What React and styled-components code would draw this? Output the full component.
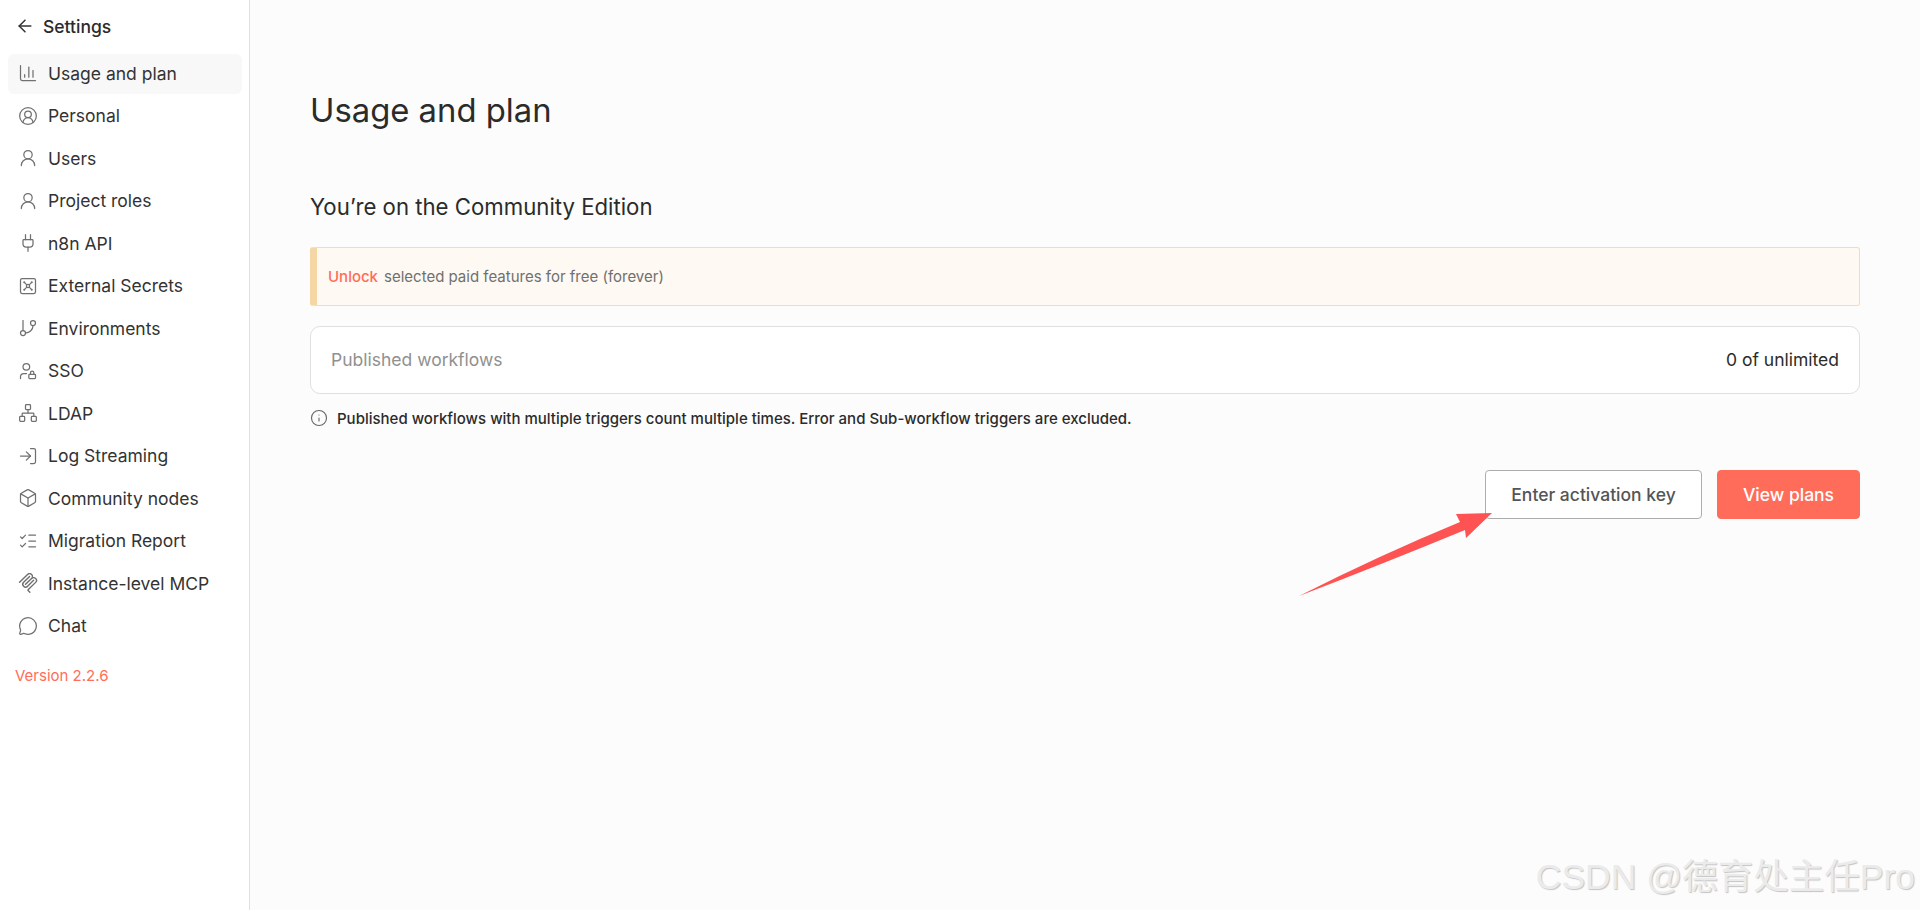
import React from "react";
import styled, { createGlobalStyle } from "styled-components";
import {
  ArrowLeft,
  ChartColumn,
  CircleUserRound,
  UserRound,
  Plug,
  Vault,
  GitBranch,
  UserLock,
  Network,
  LogIn,
  Box,
  ListChecks,
  MessageCircle,
  Info
} from "lucide-react";

const GlobalStyle = createGlobalStyle`
  html, body {
    margin: 0;
    padding: 0;
    height: 100%;
    background: #fcfcfc;
    font-family: Inter, "Liberation Sans", sans-serif;
    color: #2b2b2b;
  }
`;

const McpIcon = ({ size = 20 }) => (
  <svg width={size} height={size} viewBox="0 0 24 24" fill="#707070">
    <path d="M15.688 2.343a2.588 2.588 0 00-3.61 0l-9.626 9.44a.863.863 0 01-1.203 0 .823.823 0 010-1.18l9.626-9.44a4.313 4.313 0 016.016 0 4.116 4.116 0 011.204 3.54 4.3 4.3 0 013.609 1.18l.05.05a4.115 4.115 0 010 5.9l-8.706 8.537a.274.274 0 000 .393l1.788 1.754a.823.823 0 010 1.18.863.863 0 01-1.203 0l-1.788-1.753a1.92 1.92 0 010-2.754l8.706-8.538a2.47 2.47 0 000-3.54l-.05-.049a2.588 2.588 0 00-3.607-.003l-7.172 7.034-.002.002-.098.097a.863.863 0 01-1.204 0 .823.823 0 010-1.18l7.273-7.133a2.47 2.47 0 00-.003-3.537z" />
    <path d="M14.485 4.703a.823.823 0 000-1.18.863.863 0 00-1.204 0l-7.119 6.982a4.115 4.115 0 000 5.9 4.314 4.314 0 006.016 0l7.12-6.982a.823.823 0 000-1.18.863.863 0 00-1.204 0l-7.119 6.982a2.588 2.588 0 01-3.61 0 2.47 2.47 0 010-3.54l7.12-6.982z" />
  </svg>
);

const menuItems = [
  { label: "Usage and plan", icon: ChartColumn, active: true },
  { label: "Personal", icon: CircleUserRound },
  { label: "Users", icon: UserRound },
  { label: "Project roles", icon: UserRound },
  { label: "n8n API", icon: Plug },
  { label: "External Secrets", icon: Vault },
  { label: "Environments", icon: GitBranch },
  { label: "SSO", icon: UserLock },
  { label: "LDAP", icon: Network },
  { label: "Log Streaming", icon: LogIn },
  { label: "Community nodes", icon: Box },
  { label: "Migration Report", icon: ListChecks },
  { label: "Instance-level MCP", icon: McpIcon },
  { label: "Chat", icon: MessageCircle }
];

const Page = styled.div`
  display: flex;
  width: 1920px;
  height: 910px;
  overflow: hidden;
  position: relative;
`;

const Sidebar = styled.nav`
  width: 250px;
  flex: none;
  box-sizing: border-box;
  background: #ffffff;
  border-right: 1px solid #e0e0e0;
  padding: 14px 7px 0 8px;
`;

const BackRow = styled.div`
  display: flex;
  align-items: center;
  gap: 8px;
  height: 24px;
  padding-left: 7px;
  margin-bottom: 16px;
  font-size: 17.5px;
  font-weight: 500;
  color: #2b2b2b;

  svg {
    color: #333;
  }
`;

const Menu = styled.div`
  display: flex;
  flex-direction: column;
  gap: 2.5px;
`;

const MenuItem = styled.div`
  display: flex;
  align-items: center;
  gap: 10px;
  box-sizing: border-box;
  height: 40px;
  padding: 0 0 2px 10px;
  border-radius: 6px;
  font-size: 17.5px;
  color: #333;
  background: ${({ $active }) => ($active ? "#f8f8f8" : "transparent")};

  svg {
    flex: none;
    color: #707070;
  }
`;

const Version = styled.div`
  margin: 19px 0 0 7px;
  font-size: 15px;
  color: #ff6d5a;
`;

const Main = styled.main`
  flex: 1;
  box-sizing: border-box;
  padding: 89px 60px 0 60px;
  background: #fcfcfc;
`;

const Title = styled.h1`
  margin: 0;
  font-size: 32.8px;
  line-height: 42px;
  font-weight: 400;
  color: #2b2b2b;
`;

const Subtitle = styled.h2`
  margin: 61px 0 0;
  font-size: 22.2px;
  line-height: 30px;
  font-weight: 400;
  color: #2b2b2b;
`;

const Banner = styled.div`
  display: flex;
  align-items: center;
  gap: 6px;
  box-sizing: border-box;
  height: 59px;
  margin-top: 25px;
  padding-left: 11px;
  background: #fef9f2;
  border: 1px solid #f5dcb1;
  border-left: 7px solid #f5d7a5;
  border-radius: 3px;
  font-size: 15px;
  color: #707070;
`;

const UnlockLink = styled.span`
  color: #ff6d5a;
  font-weight: 500;
`;

const UsageCard = styled.div`
  display: flex;
  align-items: center;
  justify-content: space-between;
  box-sizing: border-box;
  height: 68px;
  margin-top: 20px;
  padding: 0 20px 1px;
  background: #ffffff;
  border: 1px solid #e0e0e0;
  border-radius: 10px;
  font-size: 17.5px;
`;

const UsageLabel = styled.span`
  color: #909090;
`;

const UsageValue = styled.span`
  color: #2b2b2b;
`;

const Note = styled.div`
  display: flex;
  align-items: center;
  gap: 9px;
  margin-top: 14px;
  height: 20px;
  font-size: 15px;
  font-weight: 500;
  color: #2b2b2b;

  svg {
    color: #666;
  }
`;

const Actions = styled.div`
  display: flex;
  justify-content: flex-end;
  gap: 15px;
  margin-top: 42px;
`;

const Button = styled.button`
  box-sizing: border-box;
  height: 49px;
  padding: 0;
  width: ${({ $width }) => $width}px;
  font-family: inherit;
  font-size: 17.5px;
  font-weight: 500;
  border-radius: 4px;
  border: 1px solid ${({ $primary }) => ($primary ? "#ff6d5a" : "#adadad")};
  background: ${({ $primary }) => ($primary ? "#ff6d5a" : "#ffffff")};
  color: ${({ $primary }) => ($primary ? "#ffffff" : "#555555")};
`;

const Annotation = styled.svg`
  position: absolute;
  left: 1290px;
  top: 505px;
`;

const Watermark = styled.div`
  position: absolute;
  right: 5px;
  top: 855px;
  font-family: "Liberation Sans", "Noto Sans CJK SC", sans-serif;
  font-size: 35.5px;
  line-height: 44px;
  white-space: nowrap;
  color: #ebebeb;
  text-shadow: 1px 1px 1px #c4c4c4;
`;

const App = () => (
  <Page>
    <GlobalStyle />
    <Sidebar>
      <BackRow>
        <ArrowLeft size={20} strokeWidth={1.8} />
        Settings
      </BackRow>
      <Menu>
        {menuItems.map(({ label, icon: Icon, active }) => (
          <MenuItem key={label} $active={active}>
            <Icon size={20} strokeWidth={1.5} />
            {label}
          </MenuItem>
        ))}
      </Menu>
      <Version>Version 2.2.6</Version>
    </Sidebar>
    <Main>
      <Title>Usage and plan</Title>
      <Subtitle>You’re on the Community Edition</Subtitle>
      <Banner>
        <UnlockLink>Unlock</UnlockLink> selected paid features for free
        (forever)
      </Banner>
      <UsageCard>
        <UsageLabel>Published workflows</UsageLabel>
        <UsageValue>0 of unlimited</UsageValue>
      </UsageCard>
      <Note>
        <Info size={18} strokeWidth={1.5} />
        Published workflows with multiple triggers count multiple times. Error
        and Sub-workflow triggers are excluded.
      </Note>
      <Actions>
        <Button $width={217}>Enter activation key</Button>
        <Button $width={143} $primary>
          View plans
        </Button>
      </Actions>
    </Main>
    <Annotation width="210" height="105" viewBox="0 0 210 105">
      <path
        d="M9 91 Q90 50 170 17 L166 9 L202 8 L176 33 L175 25 Q90 60 9 91 Z"
        fill="#ff5252"
      />
    </Annotation>
    <Watermark>CSDN @德育处主任Pro</Watermark>
  </Page>
);

export default App;
